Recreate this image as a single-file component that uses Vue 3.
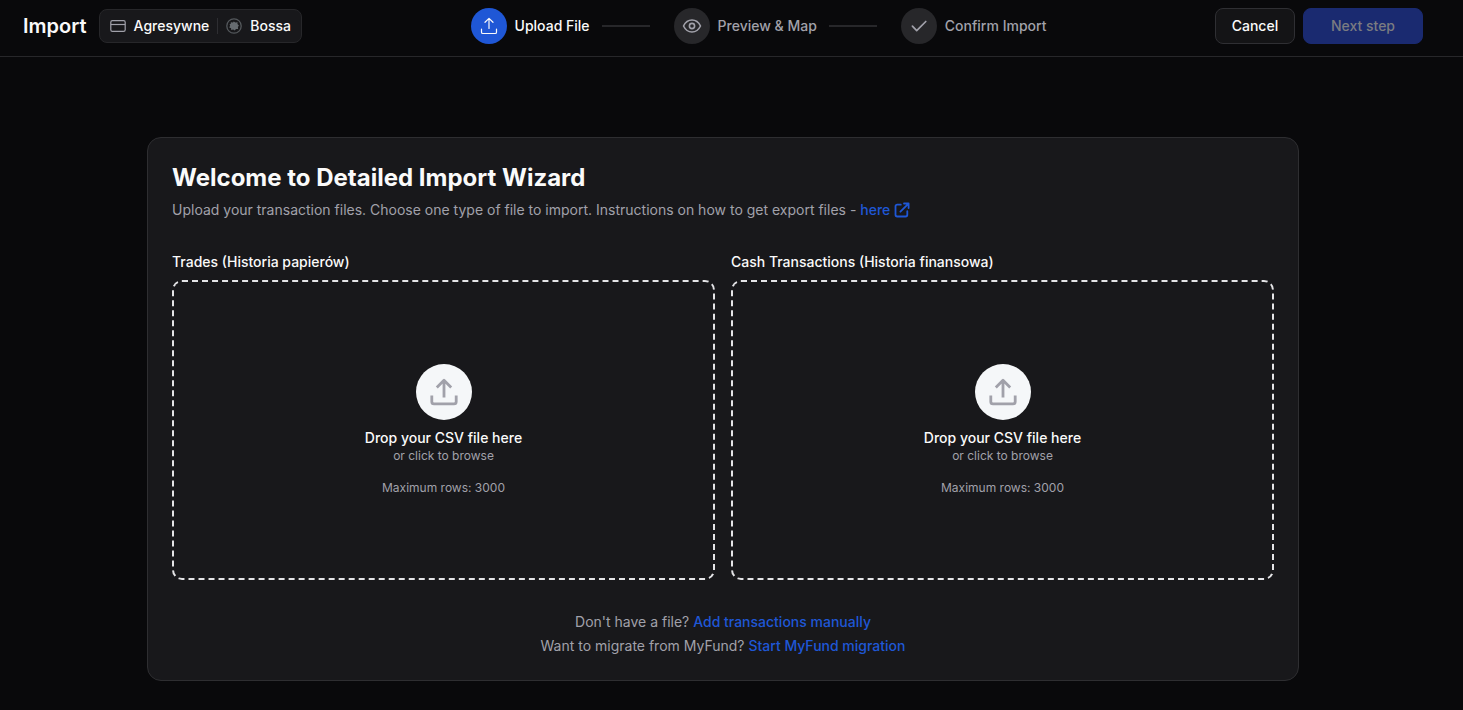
<script setup>
const steps = [
  { label: 'Upload File', icon: 'upload', active: true },
  { label: 'Preview & Map', icon: 'eye', active: false },
  { label: 'Confirm Import', icon: 'check', active: false },
]

const uploads = [
  { id: 'trades', label: 'Trades (Historia papierów)' },
  { id: 'cash', label: 'Cash Transactions (Historia finansowa)' },
]
</script>

<template>
  <div class="page">
    <header class="topbar">
      <div class="heading">
        <h1 class="title">Import</h1>
        <div class="context">
          <span class="context-item">
            <svg class="icon-16" viewBox="0 0 16 16" fill="none" stroke="#a1a1aa" stroke-width="1.2">
              <rect x="0.8" y="2.6" width="14.4" height="10.8" rx="1.6" />
              <path d="M0.8 6.5h14.4" />
            </svg>
            Agresywne
          </span>
          <span class="context-divider"></span>
          <span class="context-item">
            <svg class="icon-16" viewBox="0 0 16 16" fill="none">
              <circle cx="8" cy="8" r="7.2" stroke="#54585c" stroke-width="1.3" />
              <path d="M4.800 4.200l2.200.3.800-1.100 1.500 1 2.300-.2-.2 1.900 1.500 1.300-1 1.500.2 2-2.100.2-1.300 1.500-1.500-1-2 .3-.1-1.700-1.900-.7.900-1.700-.5-1.700 1.300-.3z" fill="#666b70" />
            </svg>
            Bossa
          </span>
        </div>
      </div>

      <ol class="steps">
        <li v-for="step in steps" :key="step.label" class="step" :class="{ active: step.active }">
          <span class="step-badge">
            <svg v-if="step.icon === 'upload'" class="icon-20" viewBox="0 0 20 20" fill="none" stroke="currentColor" stroke-width="1.2" stroke-linecap="round" stroke-linejoin="round">
              <path d="M10 12.500V2.700M6 6.300l4-3.900 4 3.900M2.500 13v3.200c0 .8.500 1.300 1.300 1.300h12.400c.8 0 1.300-.5 1.300-1.300V13" />
            </svg>
            <svg v-else-if="step.icon === 'eye'" class="icon-20" viewBox="0 0 20 20" fill="none" stroke="currentColor" stroke-width="1.600" stroke-linecap="round" stroke-linejoin="round">
              <path d="M1.500 10C3.300 6.300 6.300 4 10 4s6.700 2.300 8.500 6c-1.800 3.700-4.800 6-8.500 6s-6.700-2.300-8.500-6z" />
              <circle cx="10" cy="10" r="2.600" />
            </svg>
            <svg v-else class="icon-20" viewBox="0 0 20 20" fill="none" stroke="currentColor" stroke-width="1.700" stroke-linecap="round" stroke-linejoin="round">
              <path d="M3.400 10.200l4.300 4.500 9.100-9.200" />
            </svg>
          </span>
          <span class="step-label">{{ step.label }}</span>
        </li>
      </ol>

      <div class="actions">
        <button type="button" class="btn cancel">Cancel</button>
        <button type="button" class="btn next" disabled>Next step</button>
      </div>
    </header>

    <main class="content">
      <section class="card">
        <h2 class="card-title">Welcome to Detailed Import Wizard</h2>
        <p class="intro">
          Upload your transaction files. Choose one type of file to import. Instructions on how to get export files -
          <a href="#" class="link here">here<svg class="icon-16" viewBox="0 0 16 16" fill="none" stroke="currentColor" stroke-width="1.800" stroke-linecap="round" stroke-linejoin="round">
            <path d="M6.800 2.700H3.200c-1 0-1.700.7-1.700 1.700v8.400c0 1 .7 1.700 1.700 1.700h8.400c1 0 1.700-.7 1.700-1.700V9.200M10 1.500h4.600v4.600M14.300 1.800L6.400 9.700" />
          </svg></a>
        </p>

        <div class="uploads">
          <div v-for="item in uploads" :key="item.id" class="upload">
            <label class="upload-label" :for="item.id">{{ item.label }}</label>
            <button :id="item.id" type="button" class="dropzone">
              <span class="drop-icon">
                <svg class="icon-32" viewBox="0 0 32 32" fill="none" stroke="currentColor" stroke-width="2.800" stroke-linejoin="round">
                  <path d="M16 21.500V4.500M8.800 11.500L16 4.300l7.200 7.200M3.800 19.500v6.200c0 1.400.8 2.200 2.200 2.200h20c1.400 0 2.200-.8 2.200-2.200v-6.200" />
                </svg>
              </span>
              <span class="drop-title">Drop your CSV file here</span>
              <span class="drop-hint">or click to browse</span>
              <span class="drop-limit">Maximum rows: 3000</span>
            </button>
          </div>
        </div>

        <div class="alternatives">
          <p>Don't have a file? <a href="#" class="link">Add transactions manually</a></p>
          <p>Want to migrate from MyFund? <a href="#" class="link">Start MyFund migration</a></p>
        </div>
      </section>
    </main>
  </div>
</template>

<style>
body {
  background: #09090b;
}
</style>

<style scoped>
* {
  box-sizing: border-box;
}

.page {
  min-height: 100vh;
  background: #09090b;
  color: #fafafa;
  font-family: Inter, "Liberation Sans", sans-serif;
  font-size: 14px;
  line-height: 20px;
}

h1,
h2,
p,
ol {
  margin: 0;
  padding: 0;
}

svg {
  display: block;
  flex: none;
}

.icon-16 {
  width: 16px;
  height: 16px;
}

.icon-20 {
  width: 20px;
  height: 20px;
}

.icon-32 {
  width: 32px;
  height: 32px;
}

.topbar {
  display: flex;
  align-items: center;
  justify-content: space-between;
  padding: 8px 40px 12px 23px;
  border-bottom: 1px solid #27272a;
}

.heading {
  display: flex;
  align-items: center;
  gap: 12px;
}

.title {
  font-size: 20px;
  line-height: 28px;
  font-weight: 600;
}

.context {
  display: flex;
  align-items: center;
  gap: 8px;
  height: 34px;
  padding: 0 10px;
  border: 1px solid #27272a;
  border-radius: 8px;
  background: #18181b;
  font-weight: 500;
}

.context-item {
  display: flex;
  align-items: center;
  gap: 8px;
}

.context-divider {
  width: 1px;
  height: 16px;
  background: #2e2e32;
}

.steps {
  display: flex;
  gap: 24px;
  list-style: none;
}

.step {
  display: flex;
  align-items: center;
  gap: 8px;
  color: #a1a1aa;
  font-weight: 500;
}

.step:not(:last-child)::after {
  content: "";
  width: 48px;
  height: 2px;
  margin-left: 4px;
  background: #27272a;
}

.step-badge {
  display: flex;
  align-items: center;
  justify-content: center;
  width: 36px;
  height: 36px;
  border-radius: 50%;
  background: #27272a;
}

.active {
  color: #fafafa;
}

.active .step-badge {
  background: #1f57d6;
}

.actions {
  display: flex;
  gap: 8px;
}

.btn {
  height: 36px;
  border: 1px solid #2f2f33;
  border-radius: 8px;
  font: inherit;
  font-weight: 500;
}

.cancel {
  min-width: 80px;
  background: #141416;
  color: #fafafa;
}

.next {
  min-width: 120px;
  border-color: #1a2a70;
  background: #1a2a70;
  color: #7b7c81;
}

.content {
  padding: 80px 41px 24px 24px;
}

.card {
  max-width: 1152px;
  margin: 0 auto;
  padding: 24px;
  border: 1px solid #2e2e31;
  border-radius: 14px;
  background: #18181b;
}

.card-title {
  font-size: 24px;
  line-height: 32px;
  font-weight: 700;
}

.intro {
  margin-top: 6px;
  color: #a1a1aa;
}

.link {
  color: #1f57d6;
  font-weight: 500;
  text-decoration: none;
}

.here {
  display: inline-flex;
  align-items: center;
  gap: 4px;
}

.uploads {
  display: grid;
  grid-template-columns: 1fr 1fr;
  gap: 16px;
  margin-top: 32px;
}

.upload {
  display: flex;
  flex-direction: column;
  gap: 8px;
}

.upload-label {
  font-weight: 500;
}

.dropzone {
  display: flex;
  flex-direction: column;
  align-items: center;
  justify-content: center;
  min-height: 300px;
  padding: 16px;
  border: 2px dashed #e4e4e7;
  border-radius: 10px;
  background: transparent;
  color: #a1a1aa;
  font: inherit;
  font-size: 12px;
  line-height: 16px;
}

.drop-icon {
  display: flex;
  align-items: center;
  justify-content: center;
  width: 56px;
  height: 56px;
  margin-bottom: 8px;
  border-radius: 50%;
  background: #f5f7f9;
}

.drop-title {
  color: #fafafa;
  font-size: 14px;
  line-height: 20px;
  font-weight: 500;
}

.drop-limit {
  margin-top: 16px;
}

.alternatives {
  display: flex;
  flex-direction: column;
  gap: 4px;
  margin-top: 32px;
  color: #a1a1aa;
  text-align: center;
}
</style>
